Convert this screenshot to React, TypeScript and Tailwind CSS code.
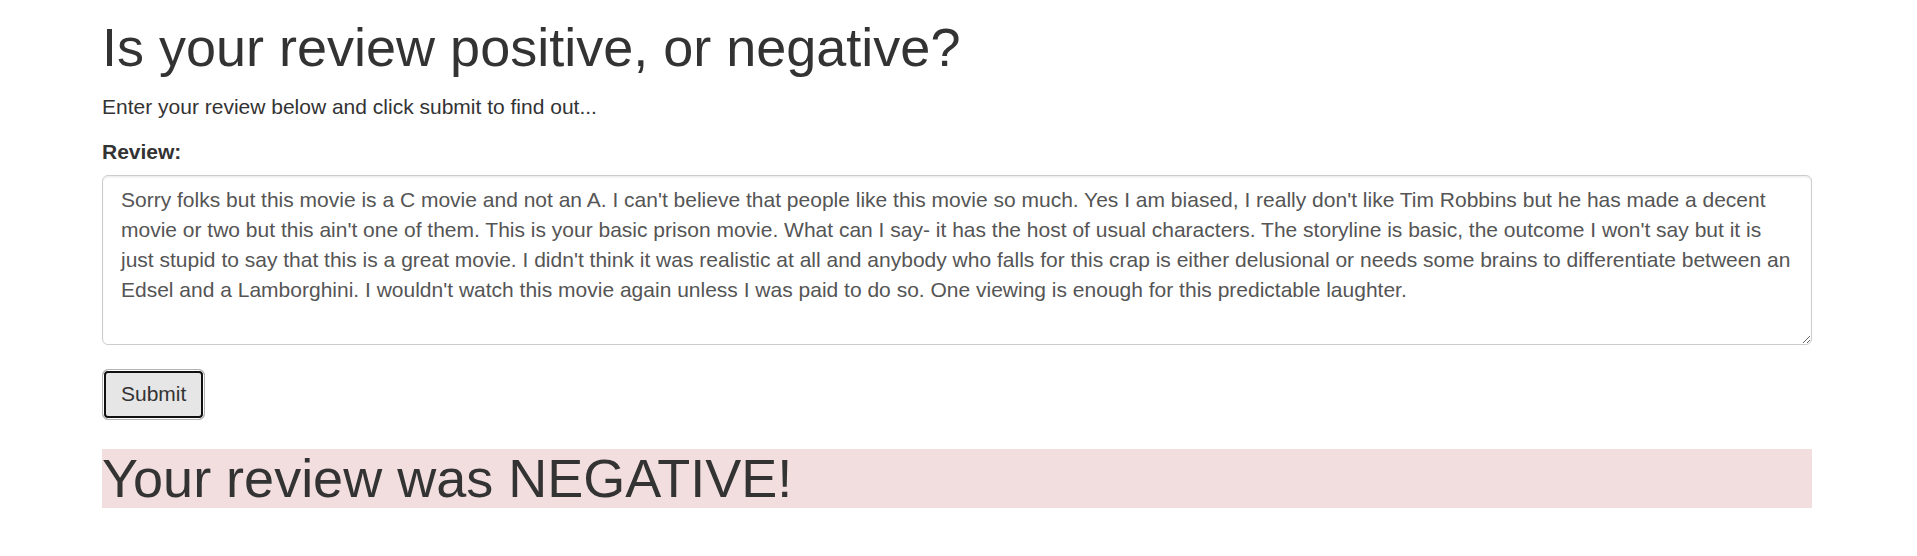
import { useState } from 'react';

const REVIEW =
	"Sorry folks but this movie is a C movie and not an A. I can't believe that people like this movie so much. Yes I am biased, I really don't like Tim Robbins but he has made a decent movie or two but this ain't one of them. This is your basic prison movie. What can I say- it has the host of usual characters. The storyline is basic, the outcome I won't say but it is just stupid to say that this is a great movie. I didn't think it was realistic at all and anybody who falls for this crap is either delusional or needs some brains to differentiate between an Edsel and a Lamborghini. I wouldn't watch this movie again unless I was paid to do so. One viewing is enough for this predictable laughter.";

export default function App() {
	const [review, setReview] = useState(REVIEW);

	return (
		<div className="min-h-[556px] bg-white font-['Liberation_Sans',Arial,sans-serif] text-[21px] leading-[30px] text-[#333]">
			<div className="ml-[102px] w-[1710px]">
				<h1 className="mt-[18px] mb-[15px] text-[54px] leading-[59.4px] font-normal">Is your review positive, or negative?</h1>
				<p className="mb-[15px]">Enter your review below and click submit to find out...</p>

				<form onSubmit={e => e.preventDefault()}>
					{/* Review field */}
					<div className="mb-[24px]">
						<label htmlFor="review" className="inline-block mb-[7.5px] font-bold">
							Review:
						</label>
						<textarea
							id="review"
							rows={5}
							value={review}
							onChange={e => setReview(e.target.value)}
							className="block w-full h-[170px] px-[18px] py-[9px] border border-[#ccc] rounded-[6px] bg-white text-[#555] text-[21px] leading-[30px] shadow-[inset_0_1.5px_1.5px_rgba(0,0,0,0.075)] resize-y outline-none"
						/>
					</div>

					<button
						type="submit"
						className="h-[51px] px-[18px] py-[9px] border border-[#b3b3b3] rounded-[6px] bg-[#e6e6e6] text-[#333] text-[21px] leading-[30px] shadow-[inset_0_0_0_1px_#fff,inset_0_0_0_3px_#111]"
					>
						Submit
					</button>
				</form>

				{/* Result */}
				<h1 className="mt-[29px] text-[54px] leading-[59.4px] font-normal bg-[#f2dede]">Your review was NEGATIVE!</h1>
			</div>
		</div>
	);
}
